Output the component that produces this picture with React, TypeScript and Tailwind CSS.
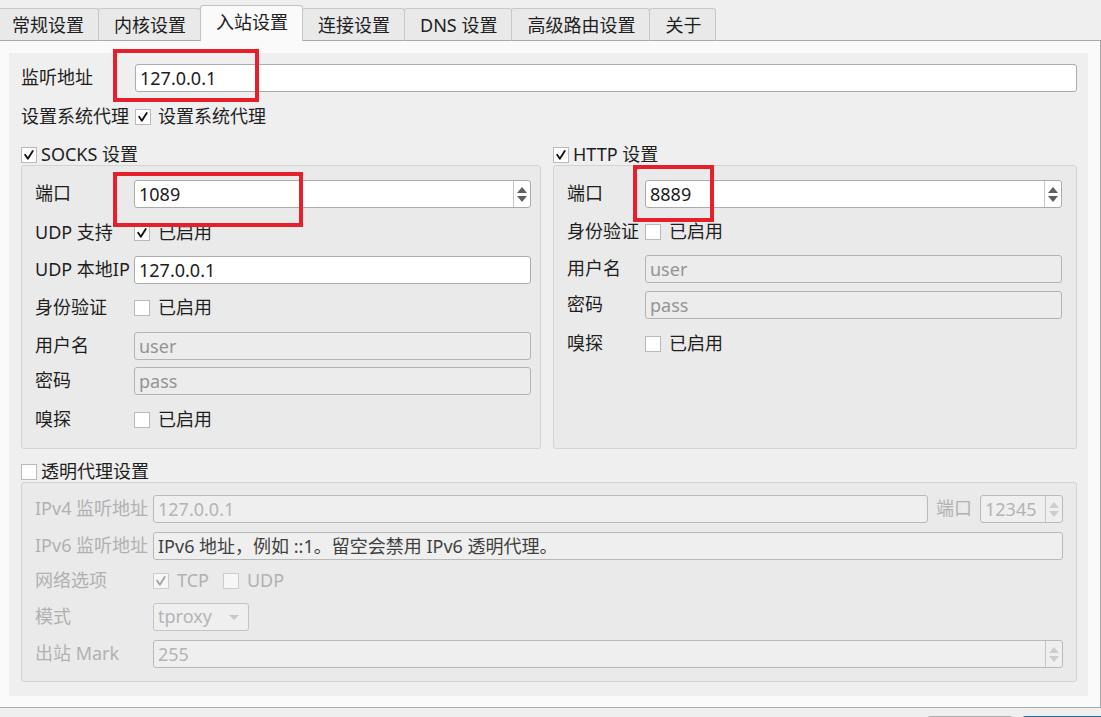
import React from 'react'

const tabs = ['常规设置', '内核设置', '入站设置', '连接设置', 'DNS 设置', '高级路由设置', '关于']

function Check({ checked = false, disabled = false }: { checked?: boolean; disabled?: boolean }) {
  return (
    <span
      className={`flex h-[16px] w-[16px] shrink-0 items-center justify-center border ${
        disabled ? 'border-[#cdcdcd] bg-[#f6f6f6]' : 'border-[#b9b9b9] bg-white'
      }`}
    >
      {checked && (
        <svg viewBox="0 0 16 16" className="h-[14px] w-[14px]">
          <path
            d="M3.6 7.6 L6.7 12.2 L12.3 3.4"
            fill="none"
            stroke={disabled ? '#a4a4a4' : '#111111'}
            strokeWidth="2.1"
            strokeLinecap="round"
            strokeLinejoin="round"
          />
        </svg>
      )}
    </span>
  )
}

function SpinArrows({ disabled = false }: { disabled?: boolean }) {
  const c = disabled ? 'fill-[#cdcdcd]' : 'fill-[#5f5f5f]'
  return (
    <div className="flex h-full w-[17px] shrink-0 flex-col items-center justify-center gap-[3px] border-l border-[#c6c6c6]">
      <svg viewBox="0 0 10 6" className={`h-[6px] w-[10px] ${c}`}>
        <path d="M0 6 L5 0 L10 6 Z" />
      </svg>
      <svg viewBox="0 0 10 6" className={`h-[6px] w-[10px] ${c}`}>
        <path d="M0 0 L10 0 L5 6 Z" />
      </svg>
    </div>
  )
}

function Field({
  value,
  placeholder,
  disabled = false,
  spin = false,
  faded = false,
  className = 'flex-1',
}: {
  value?: string
  placeholder?: string
  disabled?: boolean
  spin?: boolean
  faded?: boolean
  className?: string
}) {
  let bg = 'bg-white border-[#ababab]'
  if (disabled) bg = faded ? 'bg-[#efefef] border-[#b9b9b9]' : 'bg-[#ececec] border-[#b3b3b3]'
  let text = 'text-[#1c1c1c]'
  if (placeholder) text = faded ? 'text-[#3f3f3f]' : 'text-[#949494]'
  if (faded && value) text = 'text-[#b4b4b4]'
  return (
    <div className={`flex h-[28px] min-w-0 items-center rounded-[3px] border ${bg} ${className}`}>
      <span className={`min-w-0 flex-1 whitespace-nowrap pl-[4px] leading-[26px] ${text}`}>{value ?? placeholder}</span>
      {spin && <SpinArrows disabled={faded} />}
    </div>
  )
}

function Row({ label, width, mt, faded = false, children }: { label: string; width: string; mt: string; faded?: boolean; children: React.ReactNode }) {
  return (
    <div className={`flex h-[28px] items-center ${mt}`}>
      <span className={`${width} shrink-0 whitespace-nowrap ${faded ? 'text-[#b1b1b1]' : ''}`}>{label}</span>
      {children}
    </div>
  )
}

function Toggle({ checked = false, text, disabled = false }: { checked?: boolean; text: string; disabled?: boolean }) {
  return (
    <div className="flex items-center gap-[8px]">
      <Check checked={checked} disabled={disabled} />
      <span className={disabled ? 'text-[#b1b1b1]' : ''}>{text}</span>
    </div>
  )
}

function GroupTitle({ checked, text }: { checked: boolean; text: string }) {
  return (
    <div className="flex h-[20px] items-center gap-[4px]">
      <Check checked={checked} />
      <span>{text}</span>
    </div>
  )
}

export default function App() {
  return (
    <div className="relative h-[717px] w-[1101px] overflow-hidden bg-[#efefef] font-[family-name:'Noto_Sans','Noto_Sans_CJK_SC',sans-serif] text-[18px] leading-[1.3] text-[#1e1e1e]">
      {/* tab bar */}
      <div className="relative z-10 -ml-[4px] flex h-[41px] items-end">
        {tabs.map((t, i) =>
          i === 2 ? (
            <div
              key={t}
              className="-ml-px flex h-[36px] items-center rounded-t-[3px] border border-b-0 border-[#c3c3c3] bg-[#fafafa] pr-[14px] pb-[2px] pl-[15px]"
            >
              {t}
            </div>
          ) : (
            <div
              key={t}
              className={`${i ? '-ml-px' : ''} flex h-[33px] items-center rounded-t-[3px] border border-[#c8c8c8] border-b-[#a9a9a9] bg-[#e9e9e9] pt-[2px] pr-[14px] pl-[15px]`}
            >
              {t}
            </div>
          )
        )}
      </div>

      {/* tab pane */}
      <div className="-mt-px border-t border-r border-b border-[#a9a9a9] bg-[#fafafa] pt-[12px] pr-[12px] pb-[11px] pl-[9px]">
        <div className="flex h-[643px] flex-col bg-[#efefef] pt-[11px] pr-[11px] pl-[12px]">
          <div className="flex h-[28px] items-center">
            <span className="w-[114px] shrink-0">监听地址</span>
            <Field value="127.0.0.1" />
          </div>
          <div className="mt-[14px] flex h-[22px] items-center">
            <span className="w-[114px] shrink-0">设置系统代理</span>
            <div className="flex items-center gap-[7px]">
              <Check checked />
              <span>设置系统代理</span>
            </div>
          </div>

          <div className="mt-[17px] flex gap-[12px]">
            {/* SOCKS */}
            <div className="flex w-[520px] flex-col">
              <GroupTitle checked text="SOCKS 设置" />
              <div className="flex h-[284px] flex-col rounded-[3px] border border-[#d3d3d3] bg-[#eaeaea] pt-[14px] pr-[9px] pl-[13px]">
                <Row label="端口" width="w-[99px]" mt="">
                  <Field value="1089" spin />
                </Row>
                <Row label="UDP 支持" width="w-[99px]" mt="mt-[11px]">
                  <Toggle checked text="已启用" />
                </Row>
                <Row label="UDP 本地IP" width="w-[99px]" mt="mt-[9px]">
                  <Field value="127.0.0.1" />
                </Row>
                <Row label="身份验证" width="w-[99px]" mt="mt-[10px]">
                  <Toggle text="已启用" />
                </Row>
                <Row label="用户名" width="w-[99px]" mt="mt-[10px]">
                  <Field placeholder="user" disabled />
                </Row>
                <Row label="密码" width="w-[99px]" mt="mt-[7px]">
                  <Field placeholder="pass" disabled />
                </Row>
                <Row label="嗅探" width="w-[99px]" mt="mt-[11px]">
                  <Toggle text="已启用" />
                </Row>
              </div>
            </div>

            {/* HTTP */}
            <div className="flex flex-1 flex-col">
              <GroupTitle checked text="HTTP 设置" />
              <div className="flex h-[284px] flex-col rounded-[3px] border border-[#d3d3d3] bg-[#eaeaea] pt-[14px] pr-[14px] pl-[13px]">
                <Row label="端口" width="w-[78px]" mt="">
                  <Field value="8889" spin />
                </Row>
                <Row label="身份验证" width="w-[78px]" mt="mt-[10px]">
                  <Toggle text="已启用" />
                </Row>
                <Row label="用户名" width="w-[78px]" mt="mt-[9px]">
                  <Field placeholder="user" disabled />
                </Row>
                <Row label="密码" width="w-[78px]" mt="mt-[8px]">
                  <Field placeholder="pass" disabled />
                </Row>
                <Row label="嗅探" width="w-[78px]" mt="mt-[11px]">
                  <Toggle text="已启用" />
                </Row>
              </div>
            </div>
          </div>

          {/* transparent proxy */}
          <div className="mt-[13px] flex flex-col">
            <GroupTitle checked={false} text="透明代理设置" />
            <div className="flex h-[200px] flex-col rounded-[3px] border border-[#d3d3d3] bg-[#eaeaea] pt-[12px] pr-[13px] pl-[13px]">
              <Row label="IPv4 监听地址" width="w-[118px]" mt="" faded>
                <Field value="127.0.0.1" disabled faded />
                <span className="ml-[8px] mr-[8px] text-[#b1b1b1]">端口</span>
                <Field value="12345" disabled faded spin className="w-[83px]" />
              </Row>
              <Row label="IPv6 监听地址" width="w-[118px]" mt="mt-[9px]" faded>
                <Field placeholder="IPv6 地址，例如 ::1。留空会禁用 IPv6 透明代理。" disabled faded />
              </Row>
              <Row label="网络选项" width="w-[118px]" mt="mt-[7px]" faded>
                <div className="flex items-center gap-[14px]">
                  <Toggle checked disabled text="TCP" />
                  <Toggle disabled text="UDP" />
                </div>
              </Row>
              <Row label="模式" width="w-[118px]" mt="mt-[8px]" faded>
                <div className="flex h-[28px] w-[96px] items-center justify-between rounded-[3px] border border-[#c4c4c4] bg-[#efefef] pr-[9px] pl-[4px] text-[#b4b4b4]">
                  <span>tproxy</span>
                  <svg viewBox="0 0 10 5" className="h-[5px] w-[10px] fill-[#c6c6c6]">
                    <path d="M0 0 L10 0 L5 5 Z" />
                  </svg>
                </div>
              </Row>
              <Row label="出站 Mark" width="w-[118px]" mt="mt-[9px]" faded>
                <Field value="255" disabled faded spin />
              </Row>
            </div>
          </div>
        </div>
      </div>

      {/* dialog buttons (cut off) */}
      <div className="mt-[8px] flex justify-end gap-[9px]">
        <div className="h-[30px] w-[86px] rounded-[3px] border border-[#ababab] bg-[#f4f4f4]" />
        <div className="-mr-[10px] h-[30px] w-[89px] rounded-[3px] border border-[#2a6ea6] bg-[#3b82c4]" />
      </div>

      {/* red annotation boxes */}
      <div className="absolute top-[49px] left-[113px] h-[53px] w-[146px] border-[4px] border-[#e5202b]" />
      <div className="absolute top-[172px] left-[113px] h-[55px] w-[190px] border-[4px] border-[#e5202b]" />
      <div className="absolute top-[165px] left-[633px] h-[57px] w-[81px] border-[4px] border-[#e5202b]" />
    </div>
  )
}
